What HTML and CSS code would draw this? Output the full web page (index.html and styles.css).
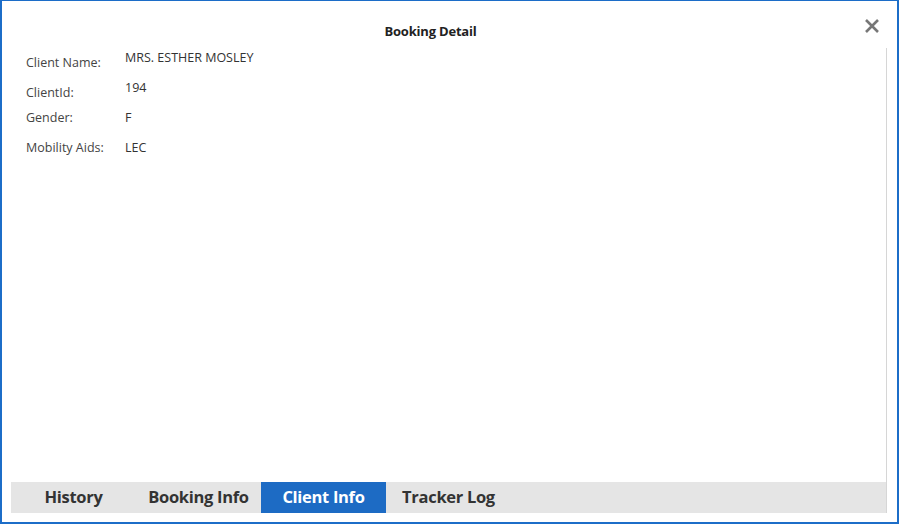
FILE: index.html
```html
<!DOCTYPE html>
<html lang="en">
<head>
<meta charset="utf-8">
<title>Booking Detail</title>
<link rel="stylesheet" href="styles.css">
</head>
<body>
<div class="modal">
  <header class="modal-header">
    <h1 class="modal-title">Booking Detail</h1>
    <button class="close-btn" aria-label="Close">
      <svg width="16" height="16" viewBox="0 0 16 16"><path d="M2 2 L14 14 M14 2 L2 14" stroke="#777" stroke-width="2.6" stroke-linecap="butt"/></svg>
    </button>
  </header>
  <div class="modal-body">
    <div class="info">
      <div class="row row-offset">
        <span class="label">Client Name:</span>
        <span class="value">MRS. ESTHER MOSLEY</span>
      </div>
      <div class="row row-offset row-gap">
        <span class="label">ClientId:</span>
        <span class="value">194</span>
      </div>
      <div class="row row-gap3">
        <span class="label">Gender:</span>
        <span class="value">F</span>
      </div>
      <div class="row row-gap2">
        <span class="label">Mobility Aids:</span>
        <span class="value">LEC</span>
      </div>
    </div>
    <nav class="tabs">
      <a class="tab">History</a>
      <a class="tab">Booking Info</a>
      <a class="tab tab-active">Client Info</a>
      <a class="tab">Tracker Log</a>
    </nav>
  </div>
</div>
</body>
</html>
```

FILE: styles.css
```css
* { box-sizing: border-box; }
html, body { margin: 0; padding: 0; background: #fff; }
body { font-family: "Open Sans", "Noto Sans", "Liberation Sans", sans-serif; color: #333; }

.modal {
  width: 899px;
  height: 524px;
  border-style: solid;
  border-color: #1c6dc8;
  border-width: 1px 2px 2px 2px;
  display: flex;
  flex-direction: column;
  background: #fff;
}

.modal-header {
  height: 47px;
  display: flex;
  align-items: flex-start;
  padding: 0 17px 0 0;
}
.modal-title {
  flex: 1;
  margin: 21px 0 0 0;
  padding-right: 5px;
  text-align: center;
  font-size: 13px;
  font-weight: 700;
  line-height: 18px;
  color: #222;
  letter-spacing: -0.2px;
}
.close-btn {
  margin-top: 17px;
  width: 16px;
  height: 16px;
  padding: 0;
  border: 0;
  background: transparent;
  display: flex;
}

.modal-body {
  flex: 1;
  margin: 0 10px 9px 9px;
  border-right: 1px solid #d6d6d6;
  display: flex;
  flex-direction: column;
}

.info {
  flex: 1;
  padding: 1px 0 0 15px;
}
.row {
  display: flex;
  align-items: flex-start;
  font-size: 12.5px;
  line-height: 18px;
}
.row-offset .label { padding-top: 5px; }
.row-gap { margin-top: 7px; }
.row-gap3 { margin-top: 7px; }
.row-gap2 { margin-top: 12px; }
.label {
  width: 99px;
  color: #444;
}
.value {
  color: #333;
}

.tabs {
  height: 31px;
  background: #e5e5e5;
  display: flex;
}
.tab {
  width: 125px;
  display: flex;
  align-items: center;
  justify-content: center;
  font-size: 16.5px;
  font-weight: 700;
  color: #333;
  letter-spacing: -0.3px;
  padding-bottom: 3px;
}
.tab-active {
  background: #1d6bc4;
  color: #fff;
}
```
